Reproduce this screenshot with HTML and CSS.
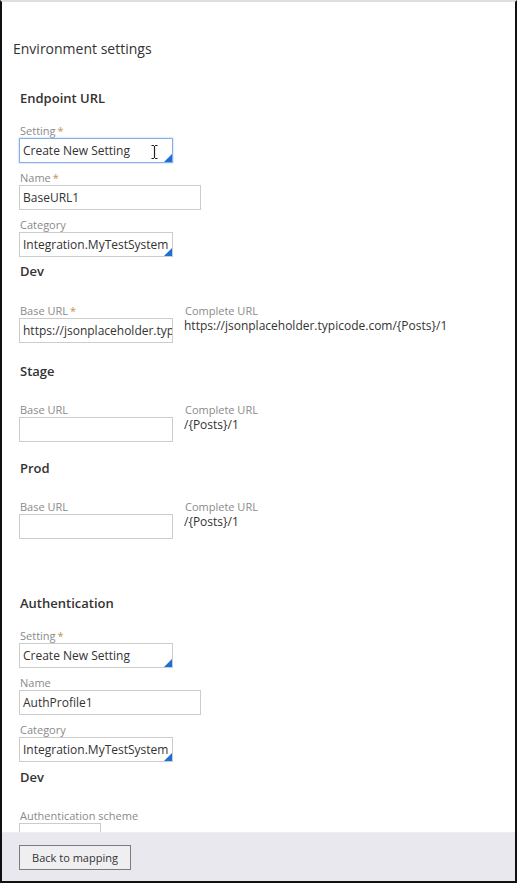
FILE: index.html
```html
<!DOCTYPE html>
<html>
<head>
<meta charset="utf-8">
<link rel="stylesheet" href="styles.css">
</head>
<body>
<div class="frame">
  <div class="content">
    <div class="title">Environment settings</div>

    <div class="section">
      <div class="heading h-endpoint">Endpoint URL</div>
      <div class="field f-first">
        <div class="label">Setting<span class="req">*</span></div>
        <div class="ctl w154 focus dd">Create New Setting
          <svg class="ibeam" width="7" height="14" viewBox="0 0 7 14"><path d="M0.5 0.5h2.5M4 0.5h2.5M3.5 1v12M0.5 13.5h2.5M4 13.5h2.5" stroke="#222" stroke-width="1.2" fill="none"/></svg>
        </div>
      </div>
      <div class="field">
        <div class="label">Name<span class="req">*</span></div>
        <div class="ctl w182">BaseURL1</div>
      </div>
      <div class="field">
        <div class="label">Category</div>
        <div class="ctl w154 dd">Integration.MyTestSystem</div>
      </div>

      <div class="heading h-sub">Dev</div>
      <div class="row r-dev">
        <div class="col-left">
          <div class="label">Base URL<span class="req">*</span></div>
          <div class="ctl w154">https://jsonplaceholder.typ</div>
        </div>
        <div class="col-right">
          <div class="label">Complete URL</div>
          <div class="value">https://jsonplaceholder.typicode.com/{Posts}/1</div>
        </div>
      </div>

      <div class="heading h-stage">Stage</div>
      <div class="row r-env">
        <div class="col-left">
          <div class="label">Base URL</div>
          <div class="ctl w154"></div>
        </div>
        <div class="col-right">
          <div class="label">Complete URL</div>
          <div class="value">/{Posts}/1</div>
        </div>
      </div>

      <div class="heading h-prod">Prod</div>
      <div class="row r-env">
        <div class="col-left">
          <div class="label">Base URL</div>
          <div class="ctl w154"></div>
        </div>
        <div class="col-right">
          <div class="label">Complete URL</div>
          <div class="value">/{Posts}/1</div>
        </div>
      </div>

      <div class="heading h-auth">Authentication</div>
      <div class="field f-first">
        <div class="label">Setting<span class="req">*</span></div>
        <div class="ctl w154 dd">Create New Setting</div>
      </div>
      <div class="field">
        <div class="label">Name</div>
        <div class="ctl w182">AuthProfile1</div>
      </div>
      <div class="field">
        <div class="label">Category</div>
        <div class="ctl w154 dd">Integration.MyTestSystem</div>
      </div>

      <div class="heading h-sub2">Dev</div>
      <div class="field f-scheme">
        <div class="label">Authentication scheme</div>
        <div class="ctl w82"></div>
      </div>
    </div>
  </div>
  <div class="footer">
    <button class="btn">Back to mapping</button>
  </div>
</div>
</body>
</html>
```

FILE: styles.css
```css
html, body {
  margin: 0;
  padding: 0;
  background: #ffffff;
}
body {
  font-family: "Open Sans", "Liberation Sans", sans-serif;
  color: #333333;
}
.frame {
  width: 517px;
  height: 883px;
  box-sizing: border-box;
  border-top: 2px solid #dedede;
  border-left: 2px solid #111111;
  border-right: 2px solid #111111;
  border-bottom: 2px solid #111111;
  display: flex;
  flex-direction: column;
  overflow: hidden;
}
.content {
  height: 830px;
  overflow: hidden;
  background: #ffffff;
}
.title {
  margin: 38px 0 0 11px;
  font-size: 14px;
  line-height: 18px;
  color: #333;
}
.section {
  margin-left: 17px;
}
.heading {
  font-size: 13px;
  font-weight: 600;
  line-height: 18px;
  color: #333;
  padding-left: 1px;
}
.h-endpoint { margin-top: 31px; }
.h-sub { margin-top: 5px; }
.h-stage { margin-top: 19px; }
.h-prod { margin-top: 17px; }
.h-auth { margin-top: 55px; }
.h-sub2 { margin-top: 6px; }

.field { margin-top: 7px; }
.field.f-first { margin-top: 16px; }
.field.f-scheme { margin-top: 22px; }

.label {
  font-size: 11px;
  line-height: 15px;
  color: #8a8a8a;
  padding-left: 1px;
}
.req {
  color: #c4914f;
  margin-left: 2px;
  font-size: 11px;
}
.ctl {
  position: relative;
  box-sizing: border-box;
  height: 25px;
  border: 1px solid #cccccc;
  background: #fff;
  font-size: 12px;
  line-height: 23px;
  padding-left: 3px;
  color: #333;
  white-space: nowrap;
  overflow: hidden;
}
.w154 { width: 154px; }
.w182 { width: 182px; }
.w82 { width: 82px; }
.ctl.focus {
  border-color: #86aee8;
  box-shadow: 0 0 2px #a9c8f2;
}
.ctl.dd::after {
  content: "";
  position: absolute;
  right: 0;
  bottom: 0;
  width: 0;
  height: 0;
  border-left: 8px solid transparent;
  border-bottom: 8px solid #1d6fd8;
}
.ibeam {
  position: absolute;
  left: 131px;
  top: 6px;
}
.row {
  display: flex;
  align-items: flex-start;
}
.r-env { margin-top: 22px; }
.r-dev { margin-top: 23px; }
.col-left { width: 165px; }
.value {
  font-size: 12px;
  line-height: 15px;
  color: #333;
}
.footer {
  flex: 1;
  background: #e8e8ee;
  border-top: 1px solid #ededf1;
  padding: 12px 0 0 17px;
  box-sizing: border-box;
}
.btn {
  width: 112px;
  height: 25px;
  box-sizing: border-box;
  border: 1px solid #7c7c7c;
  background: #efeff1;
  font-family: "Open Sans", "Liberation Sans", sans-serif;
  font-size: 11px;
  color: #333;
  padding: 0;
  border-radius: 0;
}
```
